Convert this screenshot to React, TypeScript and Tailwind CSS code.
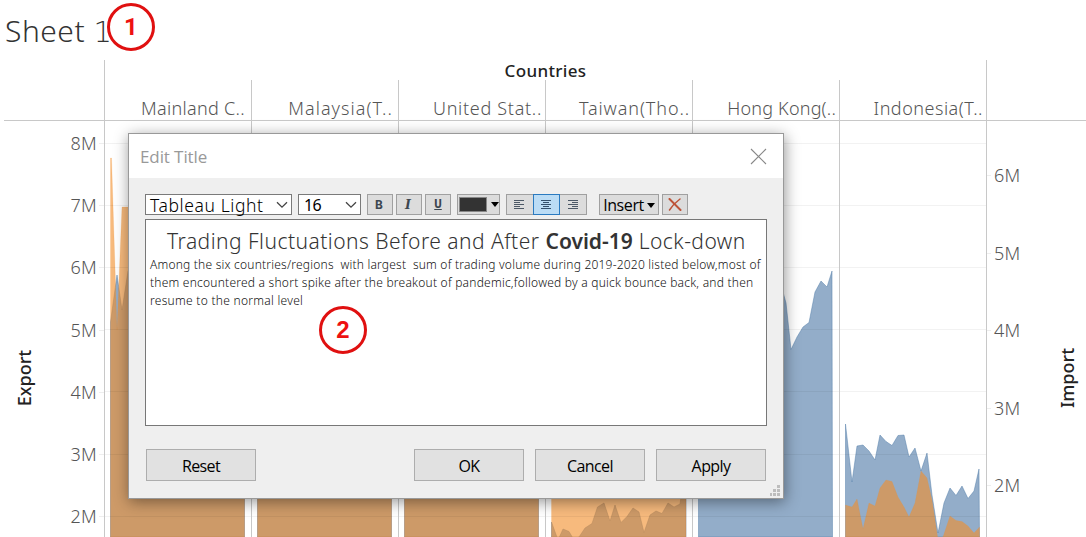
import React from "react";

type Pane = { name: string; label: string; fit: string; blue: string; orange: string };

const panes: Pane[] = [
  {
    name: "mainland",
    label: "Mainland C..",
    fit: "pr-[6px] tracking-[0.3px]",
    blue: "110.5,537 110.5,322 117,275 122,310 128,271 134,262 244.5,262 244.5,537",
    orange: "110.5,537 110.5,158 111.5,158 117,330 122,207 244.5,207 244.5,537",
  },
  {
    name: "malaysia",
    label: "Malaysia(T..",
    fit: "pr-[5px] tracking-[1.05px]",
    blue: "257.5,537 257.5,300 391.5,300 391.5,537",
    orange: "257.5,537 257.5,300 391.5,300 391.5,537",
  },
  {
    name: "us",
    label: "United Stat..",
    fit: "pr-[3px] tracking-[0.7px]",
    blue: "404.5,537 404.5,300 538.5,300 538.5,537",
    orange: "404.5,537 404.5,300 538.5,300 538.5,537",
  },
  {
    name: "taiwan",
    label: "Taiwan(Tho..",
    fit: "pr-[2px] tracking-[0.9px]",
    blue: "551.5,537 551.5,522 558,540 563,529 569,531.5 574,540 579,537 585,528 592,523.5 597.5,507 604,503 610,521 615,505 621,522.5 627,516.5 633,508 639,512 644,532.5 650,515 656,511 662,513.5 668,503 674,507 680,504 682,490 686,480 686,537",
    orange: "551.5,537 551.5,400 686,400 686,537",
  },
  {
    name: "hongkong",
    label: "Hong Kong(..",
    fit: "pr-[3px] tracking-[0.2px]",
    blue: "698.5,537 698.5,300 780,280 783,292 786,303 791,349.5 797,337 803,327 809,322.5 815,292 821,281 827,287 832,271 832.5,537",
    orange: "",
  },
  {
    name: "indonesia",
    label: "Indonesia(T..",
    fit: "pr-[3px] tracking-[0.5px]",
    blue: "845.5,537 845.5,424 852,482 857,446 863,445 869,451 875,460 880,435 886,441.5 892,445.5 898,435.5 904,435 909,457 915,448 921,471 927,453 932,495 938,533 944,503 950,488 956,495.5 962,486 968,498.5 974,491 979,469 979.5,537",
    orange: "845.5,537 845.5,505 852,507 857,499 863,529 869,503 875,506 880,488 886,480 892,481.5 898,497 904,507 909,517 915,503 921,471 927,478 932,500 938,540 943,537 950,516 956,520.5 962,521.5 968,526 974,533 979.5,527 979.5,537",
  },
];

const gridLines = [143.5, 205.5, 267.5, 329.5, 391.5, 454.5, 516.5];

function PaneChart({ pane, index }: { pane: Pane; index: number }) {
  const x0 = 105 + index * 147;
  return (
    <div className="h-[416px] w-[147px] border-l border-[#c8c8c8]">
      <svg className="block" width="146" height="416" viewBox={`${x0} 121 146 416`}>
        <polygon points={pane.blue} fill="#4e79a7" fillOpacity="0.61" stroke="#4e79a7" strokeOpacity="0.45" strokeWidth="1" />
        {pane.orange && (
          <polygon points={pane.orange} fill="#f28e2b" fillOpacity="0.61" stroke="#f28e2b" strokeOpacity="0.15" strokeWidth="1" />
        )}
        {gridLines.map((y) => (
          <line key={y} x1={x0} x2={x0 + 146} y1={y} y2={y} stroke="#000" strokeOpacity="0.05" />
        ))}
      </svg>
    </div>
  );
}

function Marker({ n, place }: { n: number; place: string }) {
  return (
    <div className={`absolute flex size-12 items-center justify-center rounded-full border-[3px] border-[#e01010] text-[24px] leading-none font-bold text-[#ee1111] ${place}`}>
      {n}
    </div>
  );
}

function ToolButton({ children, className }: { children: React.ReactNode; className: string }) {
  return (
    <div className={`flex h-[21px] items-center justify-center border border-[#a0a0a0] bg-[#dcdcdc] ${className}`}>{children}</div>
  );
}

function Chevron() {
  return (
    <svg width="12" height="8" viewBox="0 0 12 8" fill="none" stroke="#444" strokeWidth="1.3">
      <path d="M1 1.2 6 6.2 11 1.2" />
    </svg>
  );
}

function Lines({ kind, active }: { kind: "left" | "center" | "right"; active?: boolean }) {
  const widths = [10, 6, 10, 6, 10];
  return (
    <svg width="11" height="10" viewBox="0 0 11 10" shapeRendering="crispEdges">
      {widths.map((w, i) => (
        <rect key={i} x={kind === "left" ? 0 : kind === "right" ? 10 - w : (10 - w) / 2} y={i * 2} width={w} height="1" fill={active ? "#34516d" : "#4c5866"} />
      ))}
    </svg>
  );
}

function DialogButton({ label, className = "" }: { label: string; className?: string }) {
  return (
    <button className={`flex h-8 w-[110px] items-center justify-center border border-[#adadad] bg-[#e1e1e1] pt-[2px] text-[16px] leading-none tracking-[-0.6px] text-black ${className}`}>
      {label}
    </button>
  );
}

function EditTitleDialog() {
  return (
    <div className="absolute top-[133px] left-[128px] h-[366px] w-[656px] border border-[#999] bg-[#efefef] font-['Open_Sans',sans-serif] shadow-[1px_3px_14px_rgba(0,0,0,0.42)]">
      <div className="flex h-11 items-center justify-between bg-white pr-4 pl-[11px]">
        <span className="pt-[2px] text-[17px] leading-6 tracking-[-0.1px] text-[#999]">Edit Title</span>
        <svg width="17" height="17" viewBox="0 0 17 17" stroke="#888" strokeWidth="1.1">
          <path d="M1 1 16 16M16 1 1 16" />
        </svg>
      </div>
      <div className="flex pt-4 pl-4 font-['Noto_Sans',sans-serif]">
        <div className="flex h-[21px] w-[147px] items-center justify-between border border-[#7a7a7a] bg-white pr-[3px] pl-1 text-black">
          <span className="pt-px text-[17.5px] leading-[18px] font-light tracking-[0.6px]">Tableau Light</span>
          <Chevron />
        </div>
        <div className="ml-[6px] flex h-[21px] w-[63px] items-center justify-between border border-[#7a7a7a] bg-white pr-[3px] pl-[5px] text-black">
          <span className="pt-[2px] text-[16px] leading-[17px] tracking-[-0.6px]">16</span>
          <Chevron />
        </div>
        <ToolButton className="ml-[6px] w-[26px] pr-[2px] font-['DejaVu_Sans_Mono',monospace] text-[13px] leading-[19px] font-bold text-[#3c4650]">B</ToolButton>
        <ToolButton className="ml-[3px] w-[26px] pr-[2px] font-['DejaVu_Serif',serif] text-[12.5px] leading-[19px] font-bold text-[#3c4650] italic">I</ToolButton>
        <ToolButton className="ml-[3px] w-[26px] pb-px font-['DejaVu_Sans_Mono',monospace] text-[12.5px] leading-[18px] font-bold text-[#3c4650] underline">U</ToolButton>
        <ToolButton className="ml-[6px] w-[43px] gap-1">
          <span className="h-[15px] w-7 border border-[#888] bg-[#333]" />
          <svg width="8" height="5" viewBox="0 0 8 5"><path d="M0 0h8L4 5z" fill="#000" /></svg>
        </ToolButton>
        <ToolButton className="ml-[6px] w-[27px] border-r-0 pr-[2px]"><Lines kind="left" /></ToolButton>
        <div className="flex h-[21px] w-[27px] items-center justify-center border border-[#2a7ac0] bg-[#bbdcf5]"><Lines kind="center" active /></div>
        <ToolButton className="w-[27px] border-l-0"><Lines kind="right" /></ToolButton>
        <ToolButton className="ml-3 w-[60px] gap-[3px] pt-px font-['Open_Sans',sans-serif] text-[16px] leading-[18px] tracking-[-0.4px] text-black">
          Insert
          <svg width="8" height="5" viewBox="0 0 8 5"><path d="M0 0h8L4 5z" fill="#000" /></svg>
        </ToolButton>
        <ToolButton className="ml-[3px] w-[26px]">
          <svg width="14" height="13" viewBox="0 0 14 13" fill="none" stroke="#bd5338" strokeLinecap="round">
            <path d="M1.5 1 12.5 12" strokeWidth="2" />
            <path d="M12 1C8 4 4 8 1.5 12" strokeWidth="1.5" />
          </svg>
        </ToolButton>
      </div>
      <div className="mt-1 ml-4 h-[207px] w-[622px] border border-[#777] bg-white pl-1 font-['Noto_Sans',sans-serif] font-light whitespace-pre text-[#333]">
        <p className="mt-[7px] pl-[17px] text-[21px] leading-7 tracking-[0.47px]">
          Trading Fluctuations Before and After <b className="font-semibold tracking-[0px]">Covid-19</b> Lock-down
        </p>
        <div className="pt-px text-[12px] leading-[18px] tracking-[0.21px] text-[#111]">
          <p>Among the six countries/regions  with largest  sum of trading volume during 2019-2020 listed below,most of</p>
          <p className="tracking-[0.23px]">them encountered a short spike after the breakout of pandemic,followed by a quick bounce back, and then</p>
          <p className="tracking-[0.28px]">resume to the normal level</p>
        </div>
      </div>
      <div className="mt-[23px] ml-[17px] flex">
        <DialogButton label="Reset" />
        <DialogButton label="OK" className="ml-[158px]" />
        <DialogButton label="Cancel" className="ml-[11px]" />
        <DialogButton label="Apply" className="ml-[11px]" />
      </div>
      <svg className="absolute right-[2px] bottom-[2px]" width="11" height="11" viewBox="0 0 11 11" fill="#bdbdbd">
        <path d="M7 0h3v3H7zM3 4h3v3H3zM7 4h3v3H7zM0 8h2v3H0zM3 8h3v3H3zM7 8h3v3H7z" />
      </svg>
      <Marker n={2} place="left-[190px] top-[172px] font-['Liberation_Sans',sans-serif]" />
    </div>
  );
}

export default function App() {
  return (
    <div className="relative h-[537px] w-[1086px] overflow-hidden bg-white font-['Noto_Sans',sans-serif]">
      <h1 className="h-[60px] pt-[9px] pl-[5px] text-[30px] leading-[44px] font-light tracking-[0.5px] text-[#333]">
        Sheet <span className="font-['DejaVu_Sans',sans-serif] text-[29px] font-extralight">1</span>
      </h1>
      <div className="ml-1 flex h-[61px] border-b border-[#c8c8c8]">
        <div className="w-[100px]" />
        <div className="w-[882px] border-l border-[#c8c8c8]">
          <div className="flex h-5 items-center justify-center pt-px text-[17px] leading-5 font-medium tracking-[0.35px] text-[#222]">Countries</div>
          <div className="-ml-px flex h-10">
            {panes.map((p) => (
              <div key={p.name} className={`flex w-[147px] items-end justify-end border-l border-[#c8c8c8] text-[18px] leading-6 font-light text-[#555] ${p.fit}`}>
                {p.label}
              </div>
            ))}
          </div>
        </div>
        <div className="flex-1 border-l border-[#c8c8c8]" />
      </div>
      <div className="flex h-[416px]">
        <div className="flex w-12 items-center justify-center">
          <span className="-rotate-90 text-[18px] leading-6 font-medium text-[#222] [translate:0_49px]">Export</span>
        </div>
        <div className="w-[56px] pt-[10px] font-light text-[#555]">
          {[8, 7, 6, 5, 4, 3, 2].map((n) => (
            <div key={n} className="flex h-[62.2px] items-start justify-end">
              <span className="mr-[2px] text-[18px] leading-6 tracking-[0.3px]">{n}M</span>
              <span className="mt-3 h-px w-[5px] bg-[#eee]" />
            </div>
          ))}
        </div>
        {panes.map((p, i) => <PaneChart key={p.name} pane={p} index={i} />)}
        <div className="w-[60px] border-l border-[#c8c8c8] pt-[42px] font-light text-[#555]">
          {[6, 5, 4, 3, 2].map((n) => (
            <div key={n} className="flex h-[77.5px] items-start">
              <span className="mt-3 h-px w-[4px] bg-[#eee]" />
              <span className="ml-[3px] text-[18px] leading-6 tracking-[0.3px]">{n}M</span>
            </div>
          ))}
        </div>
        <div className="flex w-10 items-center justify-center">
          <span className="-rotate-90 text-[18px] leading-6 font-medium text-[#222] [translate:1px_49px]">Import</span>
        </div>
      </div>
      <Marker n={1} place="left-[107px] top-[3px] font-['Roboto',sans-serif]" />
      <EditTitleDialog />
    </div>
  );
}
